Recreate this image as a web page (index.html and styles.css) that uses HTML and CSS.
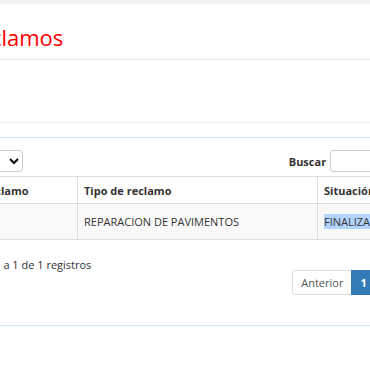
FILE: index.html
```html
<!DOCTYPE html>
<html>
  <head>
    <title>Reclamos</title>
    <link rel="stylesheet" href="styles.css">
  </head>
  <body>
    <div class="topbar"></div>
    <div class="page">
      <div class="pageheader">
        <h1>Reclamos</h1>
      </div>
      <div class="toolbar"></div>

      <div class="box">
        <div class="controls">
          <label class="length">Mostrar
            <select><option>10</option></select>
          </label>
          <label class="filter">Buscar <input type="search"></label>
        </div>

        <table class="grid">
          <thead>
            <tr>
              <th class="col1">N° de reclamo</th>
              <th class="col2">Tipo de reclamo</th>
              <th class="col3">Situación</th>
            </tr>
          </thead>
          <tbody>
            <tr>
              <td>1024</td>
              <td>REPARACION DE PAVIMENTOS</td>
              <td><span class="mark">FINALIZADO</span></td>
            </tr>
          </tbody>
        </table>

        <div class="footer">
          <div class="info">Mostrando 1 a 1 de 1 registros</div>
          <ul class="pager">
            <li><a>Anterior</a></li>
            <li class="active"><a>1</a></li>
            <li><a>Siguiente</a></li>
          </ul>
        </div>
      </div>
    </div>
  </body>
</html>
```

FILE: styles.css
```css
body {
  margin: 0;
  background: #fff;
  font-family: "Open Sans", "DejaVu Sans", sans-serif;
  font-size: 11px;
  color: #333;
  overflow: hidden;
}
.topbar {
  height: 4px;
  background: #f2f2f2;
}
.page {
  margin-left: -65px;
  width: 505px;
}
.pageheader {
  height: 55px;
  border-bottom: 1px solid #e6e6e6;
  padding-left: 30px;
}
h1 {
  margin: 0;
  padding-top: 18px;
  font-size: 22px;
  font-weight: 400;
  line-height: 30px;
  color: #ff0000;
}
.toolbar {
  height: 62px;
  border-bottom: 1px solid #ececec;
}
.box {
  margin-top: 14px;
  border-top: 1px solid #cbe9f1;
  border-bottom: 1px solid #cbe9f1;
  padding: 12px 0 30px;
}
.controls {
  display: flex;
  justify-content: space-between;
  align-items: center;
  height: 22px;
  margin-bottom: 4px;
}
.filter {
  font-weight: 700;
}
select {
  width: 44px;
  height: 22px;
  border: 1px solid #ccc;
  border-radius: 4px;
  background: #fff;
  font-size: 11px;
}
.filter input {
  width: 110px;
  height: 22px;
  box-sizing: border-box;
  border: 1px solid #ccc;
  border-radius: 3px;
  margin-left: 1px;
  padding: 0 4px;
}
.grid {
  width: 100%;
  border-collapse: collapse;
}
.grid th,
.grid td {
  text-align: left;
  padding: 0 6px;
  border-left: 1px solid #ddd;
}
.grid th:first-child,
.grid td:first-child {
  border-left: none;
  padding-left: 16px;
}
.grid th {
  height: 26px;
  border-top: 1px solid #ddd;
  border-bottom: 1px solid #ddd;
  font-weight: 700;
}
.grid td {
  height: 35px;
  background: #f9f9f9;
  border-bottom: 1px solid #ddd;
}
.col1 { width: 120px; }
.col2 { width: 227px; }
.mark {
  background: #b3d4fc;
}
.footer {
  display: flex;
  justify-content: space-between;
  align-items: flex-start;
  padding-top: 17px;
}
.info {
  line-height: 15px;
}
.pager {
  display: flex;
  list-style: none;
  margin: 13px 0 0;
  padding: 0;
}
.pager a {
  display: block;
  height: 23px;
  line-height: 23px;
  padding: 0 8px;
  border: 1px solid #ddd;
  margin-left: -1px;
  color: #555;
  background: #fff;
}
.pager li:first-child a {
  border-radius: 3px 0 0 3px;
}
.pager li:last-child a {
  border-radius: 0 3px 3px 0;
}
.pager .active a {
  background: #337ab7;
  border-color: #337ab7;
  color: #fff;
  font-weight: 700;
}
```
